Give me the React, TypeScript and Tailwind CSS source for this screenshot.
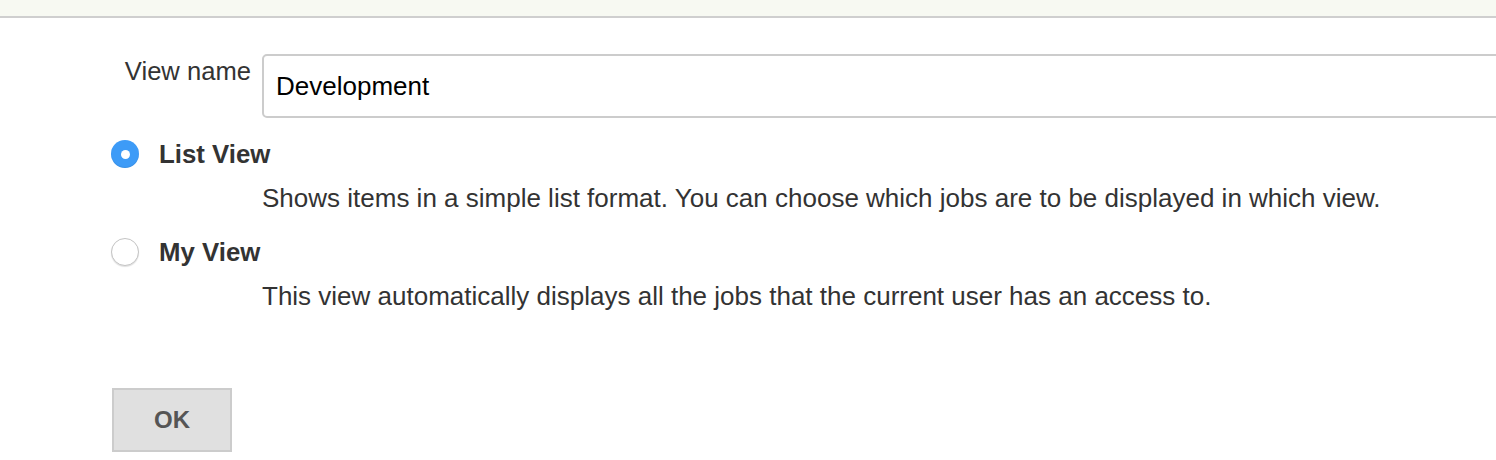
export default function App() {
  return (
    <div
      className="w-[1496px] h-[460px] overflow-hidden bg-white text-[#333]"
      style={{ fontFamily: '"Liberation Sans", Arial, Helvetica, sans-serif' }}
    >
      <div className="h-[18px] bg-[#f7f9f2] border-b-2 border-[#cfcfcf]" />

      <form className="pl-[111px] pt-[36px]">
        <div className="flex items-start">
          <label className="w-[140px] shrink-0 mt-[1px] text-right text-[25.6px] leading-[32px]">
            View name
          </label>
          <input
            type="text"
            defaultValue="Development"
            className="ml-[11px] w-[1300px] shrink-0 h-[64px] rounded-[5px] border-2 border-[#cccccc] px-[12px] text-[26px] text-black outline-none"
          />
        </div>

        <div className="mt-[20px] flex items-center gap-[20px]">
          <span className="w-[28px] h-[28px] rounded-full bg-[#3d9bf7] flex items-center justify-center shadow-[inset_0_-1px_1px_rgba(0,0,0,0.08)]">
            <span className="w-[9px] h-[9px] rounded-full bg-white" />
          </span>
          <span className="font-bold text-[25.8px] leading-[32px]">List View</span>
        </div>
        <p className="ml-[151px] mt-[12px] text-[26px] leading-[32px]">
          Shows items in a simple list format. You can choose which jobs are to be displayed in which view.
        </p>

        <div className="mt-[22px] flex items-center gap-[20px]">
          <span className="w-[28px] h-[28px] rounded-full bg-white border border-[#c4c4c4] shadow-[0_1px_1px_rgba(0,0,0,0.12)]" />
          <span className="font-bold text-[25.8px] leading-[32px]">My View</span>
        </div>
        <p className="ml-[151px] mt-[12px] text-[26px] leading-[32px]">
          This view automatically displays all the jobs that the current user has an access to.
        </p>

        <button
          type="button"
          className="mt-[76px] ml-px w-[120px] h-[64px] bg-[#e0e0e0] border-2 border-[#cccccc] text-[#555] font-bold text-[24px]"
        >
          OK
        </button>
      </form>
    </div>
  );
}
